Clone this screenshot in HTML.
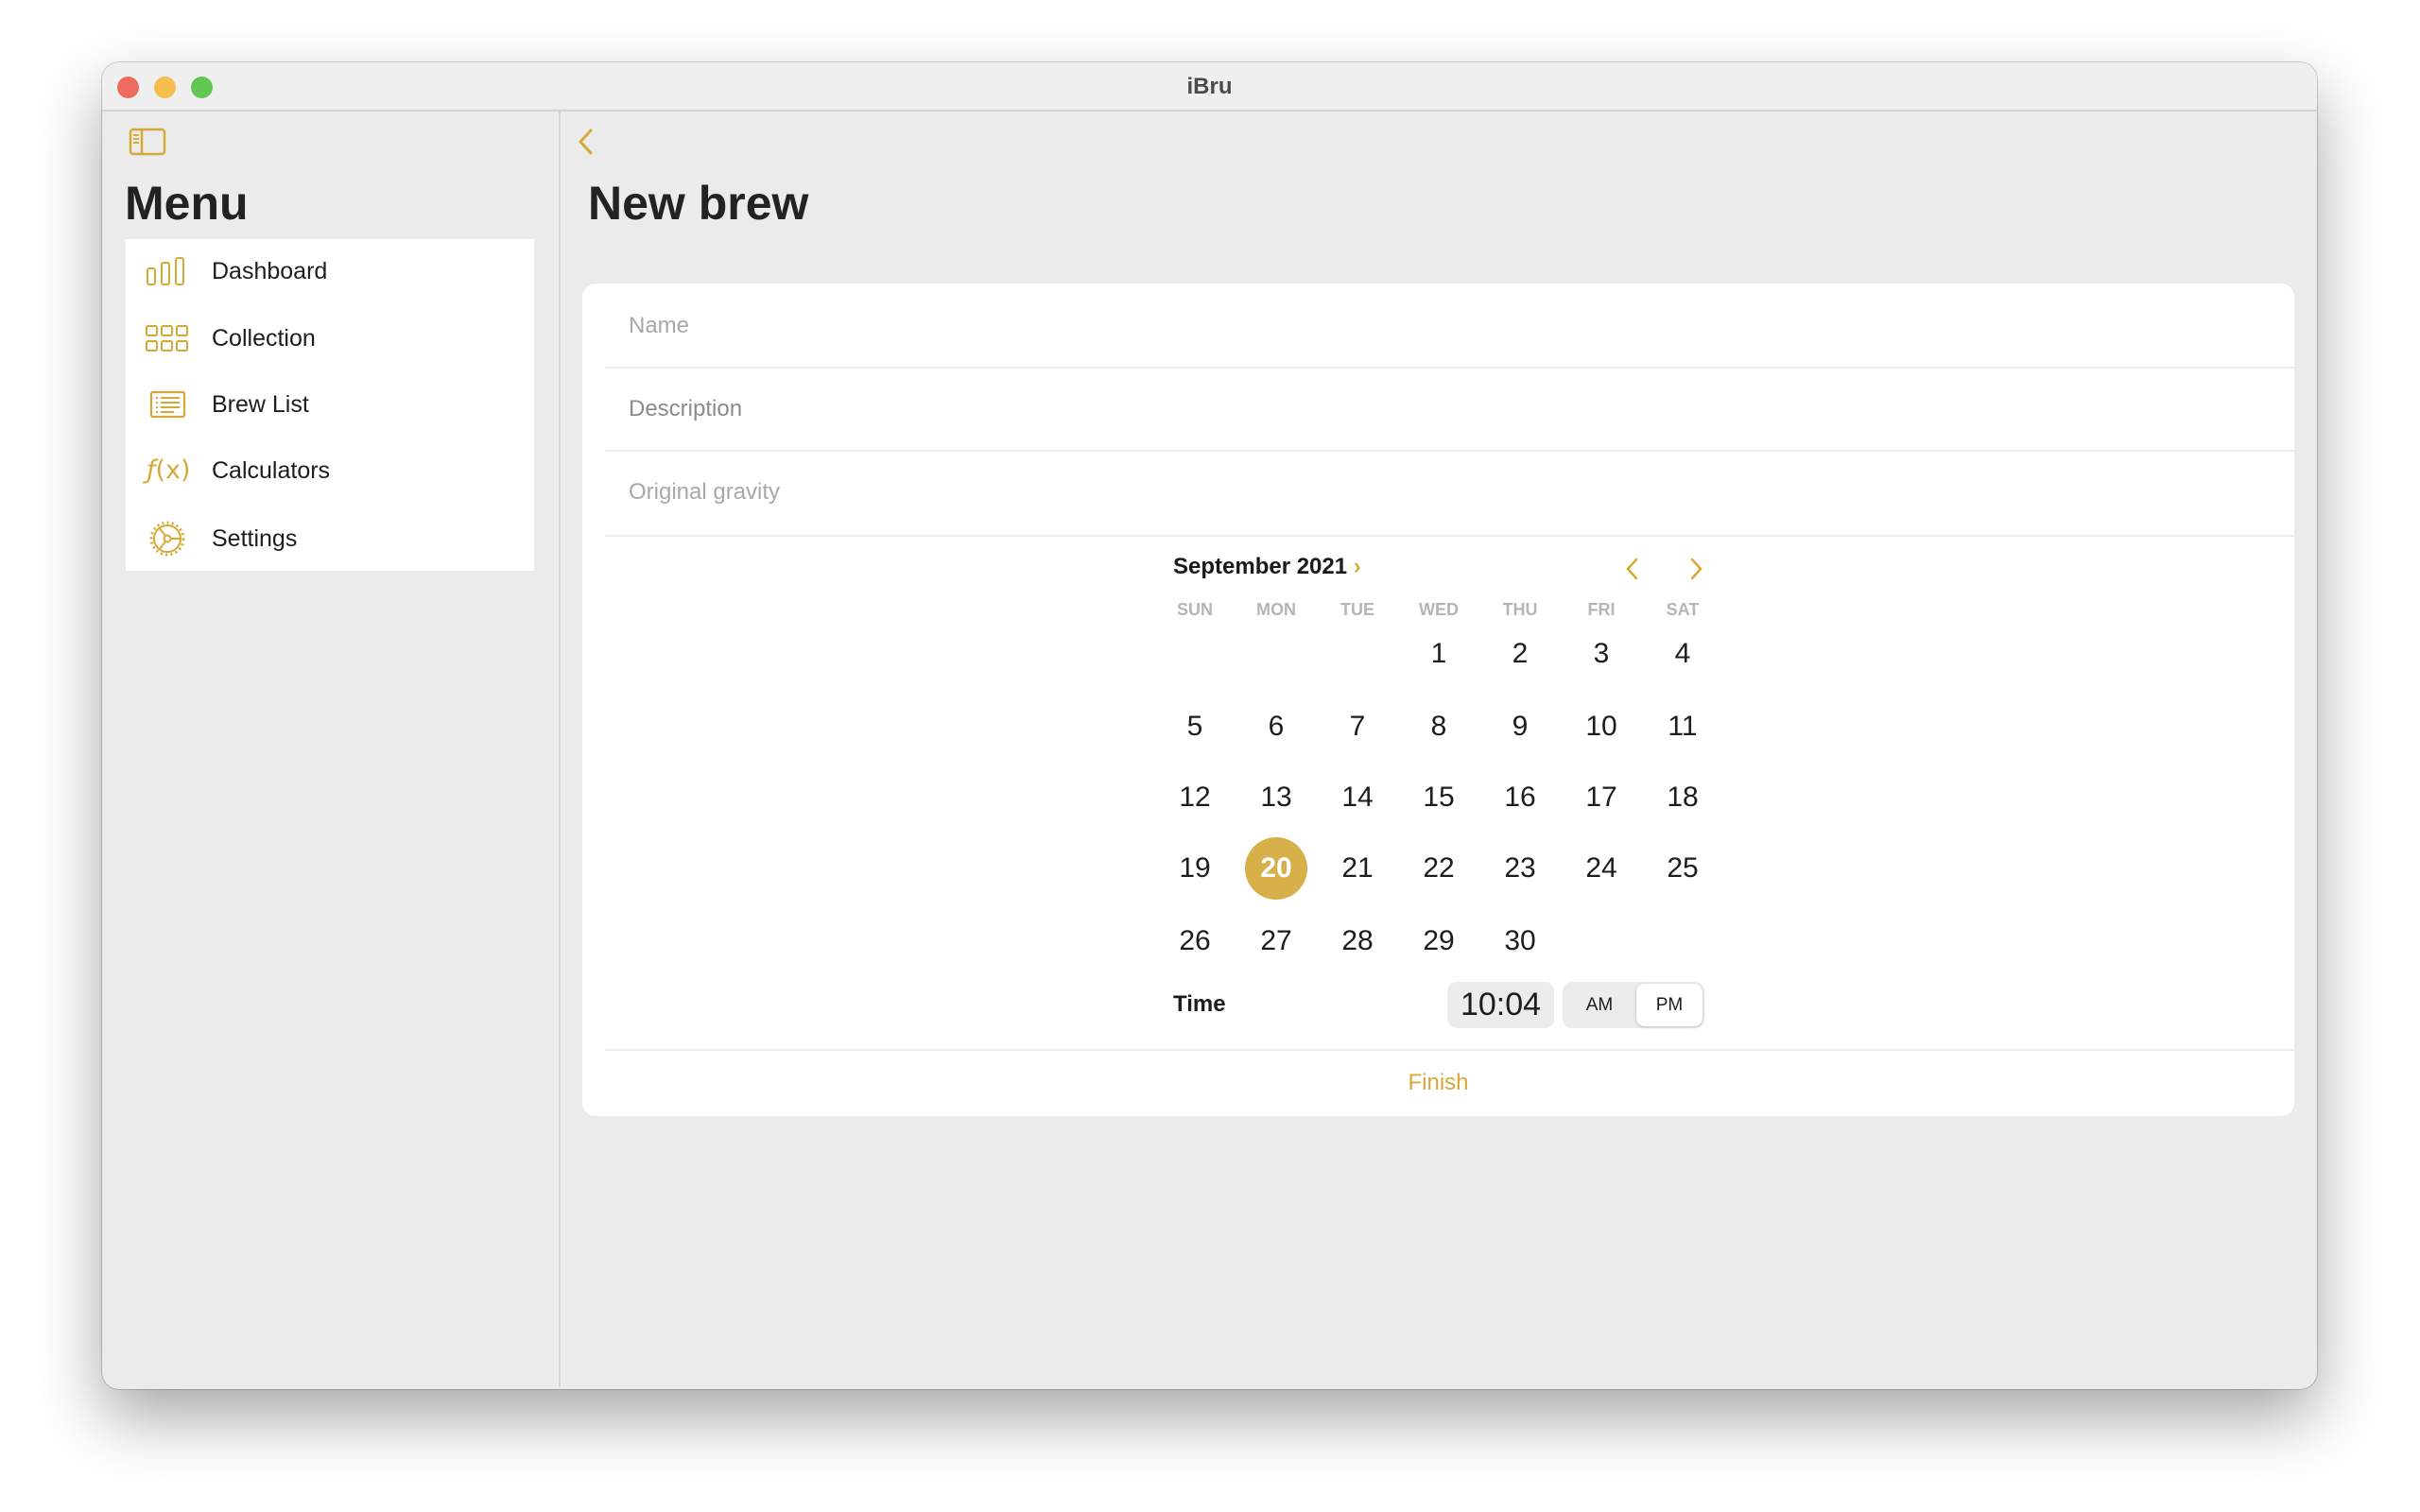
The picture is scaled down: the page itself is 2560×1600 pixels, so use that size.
<!DOCTYPE html>
<html><head><meta charset="utf-8"><style>
*{margin:0;padding:0;box-sizing:border-box}
body{width:2560px;height:1600px;background:#fff;font-family:"Liberation Sans",sans-serif;position:relative;overflow:hidden;color:#1d1d1d}
.win{position:absolute;left:108px;top:66px;width:2343px;height:1404px;border-radius:18px;background:#ebebeb;box-shadow:0 30px 70px rgba(0,0,0,.35),0 0 0 1px rgba(0,0,0,.18);overflow:hidden}
.tb{position:absolute;left:0;top:0;width:100%;height:52px;background:#efefef;border-bottom:2px solid #d3d3d3}
.dot{position:absolute;top:15px;width:23px;height:23px;border-radius:50%}
.abs{position:absolute}
.gold{color:#d4a937}
.side{position:absolute;left:483px;top:52px;width:2px;height:1350px;background:#d6d6d6}
.menu{position:absolute;left:25px;top:187px;width:432px;height:351px;background:#fff}
.mi{position:absolute;left:91px;font-size:25px;line-height:30px}
.fld{position:absolute;left:49px;font-size:24px;color:#a8a8a8}
.sep{position:absolute;left:24px;right:0;height:2px;background:#ececec}
.wd{position:absolute;font-size:18px;color:#b5b5b5;font-weight:bold;width:80px;text-align:center;top:335px}
.d{position:absolute;font-size:30px;width:80px;text-align:center;line-height:40px}
</style></head><body>
<div class="win">
 <div class="tb">
  <div class="dot" style="left:16px;background:#ee6a5f"></div>
  <div class="dot" style="left:55px;background:#f5be4f"></div>
  <div class="dot" style="left:94px;background:#62c554"></div>
  <div class="abs" style="left:0;width:100%;text-align:center;top:12px;font-size:24px;font-weight:bold;color:#4a4a4a">iBru</div>
 </div>
 <div class="side"></div>
 <svg class="abs" style="left:28px;top:69px" width="40" height="30" viewBox="0 0 40 30"><rect x="2" y="2" width="36" height="26" rx="3" fill="none" stroke="#d4a937" stroke-width="2.5"/><line x1="14" y1="2" x2="14" y2="28" stroke="#d4a937" stroke-width="2.5"/><path d="M5 8h6M5 12h6M5 16h6" stroke="#d4a937" stroke-width="2"/></svg>
 <div class="abs" style="left:24px;top:120px;font-size:50px;font-weight:bold;color:#222">Menu</div>
 <div class="menu">
  <svg class="abs" style="left:21px;top:18px" width="44" height="32" viewBox="0 0 44 32"><g fill="none" stroke="#d4a937" stroke-width="2"><rect x="2" y="13" width="8" height="17" rx="2"/><rect x="17" y="7" width="8" height="23" rx="2"/><rect x="32" y="2" width="8" height="28" rx="2"/></g></svg>
  <div class="mi" style="top:19px">Dashboard</div>
  <svg class="abs" style="left:21px;top:90px" width="46" height="30" viewBox="0 0 46 30"><g fill="none" stroke="#d4a937" stroke-width="2"><rect x="1" y="2" width="11" height="10" rx="1.5"/><rect x="17" y="2" width="11" height="10" rx="1.5"/><rect x="33" y="2" width="11" height="10" rx="1.5"/><rect x="1" y="18" width="11" height="10" rx="1.5"/><rect x="17" y="18" width="11" height="10" rx="1.5"/><rect x="33" y="18" width="11" height="10" rx="1.5"/></g></svg>
  <div class="mi" style="top:90px">Collection</div>
  <svg class="abs" style="left:25px;top:159px" width="40" height="32" viewBox="0 0 40 32"><rect x="2" y="3" width="35" height="26" rx="2" fill="none" stroke="#d4a937" stroke-width="2.2"/><g stroke="#d4a937" stroke-width="2"><path d="M7 9h2M7 14h2M7 19h2M7 24h2"/><path d="M12 9h20M12 14h20M12 19h20M12 24h14"/></g></svg>
  <div class="mi" style="top:160px">Brew List</div>
  <div class="abs gold" style="left:22px;top:229px;font-size:27px;font-family:'DejaVu Sans',sans-serif"><i>ƒ</i>(x)</div>
  <div class="mi" style="top:230px">Calculators</div>
  <svg class="abs" style="left:24px;top:297px" width="40" height="40" viewBox="0 0 40 40"><g fill="none" stroke="#d4a937" stroke-width="2"><circle cx="20" cy="20" r="14"/><circle cx="20" cy="20" r="3.5"/><path d="M23.5 20H34M18 17L11 8M18 23L11 32"/></g><circle cx="20" cy="20" r="17" fill="none" stroke="#d4a937" stroke-width="3" stroke-dasharray="2 3.3"/></svg>
  <div class="mi" style="top:302px">Settings</div>
 </div>
 <svg class="abs" style="left:500px;top:69px" width="24" height="30" viewBox="0 0 24 30"><path d="M17 3L6 15l11 12" fill="none" stroke="#d4a937" stroke-width="3" stroke-linecap="round" stroke-linejoin="round"/></svg>
 <div class="abs" style="left:514px;top:120px;font-size:50px;font-weight:bold;color:#222">New brew</div>
</div>
<div class="abs" style="left:616px;top:300px;width:1811px;height:881px;background:#fff;border-radius:14px">
  <div class="fld" style="top:31px">Name</div>
  <div class="sep" style="top:88px"></div>
  <div class="fld" style="top:119px;color:#8a8a8a">Description</div>
  <div class="sep" style="top:176px"></div>
  <div class="fld" style="top:207px">Original gravity</div>
  <div class="sep" style="top:266px"></div>
  <div class="abs" style="left:625px;top:286px;font-size:24px;font-weight:bold;color:#1a1a1a">September 2021 <span class="gold">›</span></div>
  <svg class="abs" style="left:1101px;top:288px" width="20" height="28" viewBox="0 0 20 28"><path d="M14 4L5 14l9 10" fill="none" stroke="#d4a937" stroke-width="2.5" stroke-linecap="round"/></svg>
  <svg class="abs" style="left:1168px;top:288px" width="20" height="28" viewBox="0 0 20 28"><path d="M6 4l9 10-9 10" fill="none" stroke="#d4a937" stroke-width="2.5" stroke-linecap="round"/></svg>
  <div class="wd" style="left:608px">SUN</div>
  <div class="wd" style="left:694px">MON</div>
  <div class="wd" style="left:780px">TUE</div>
  <div class="wd" style="left:866px">WED</div>
  <div class="wd" style="left:952px">THU</div>
  <div class="wd" style="left:1038px">FRI</div>
  <div class="wd" style="left:1124px">SAT</div>
  <div class="abs" style="left:701px;top:586px;width:66px;height:66px;border-radius:50%;background:#d8b04a"></div>
  <div class="abs" style="left:625px;top:749px;font-size:24px;font-weight:bold">Time</div>
  <div class="abs" style="left:915px;top:739px;width:113px;height:49px;border-radius:10px;background:#ececec;font-size:34px;text-align:center;line-height:49px">10:04</div>
  <div class="abs" style="left:1037px;top:739px;width:150px;height:49px;border-radius:10px;background:#ececec"></div>
  <div class="abs" style="left:1037px;top:739px;width:78px;height:49px;font-size:19px;text-align:center;line-height:49px">AM</div>
  <div class="abs" style="left:1115px;top:741px;width:70px;height:45px;border-radius:9px;background:#fff;box-shadow:0 1px 3px rgba(0,0,0,.2);font-size:19px;text-align:center;line-height:45px">PM</div>
  <div class="sep" style="top:810px"></div>
  <div class="abs gold" style="left:0;width:1811px;text-align:center;top:832px;font-size:24px">Finish</div>
  <div class="d" style="left:866px;top:372px">1</div><div class="d" style="left:952px;top:372px">2</div><div class="d" style="left:1038px;top:372px">3</div><div class="d" style="left:1124px;top:372px">4</div>
  <div class="d" style="left:608px;top:449px">5</div><div class="d" style="left:694px;top:449px">6</div><div class="d" style="left:780px;top:449px">7</div><div class="d" style="left:866px;top:449px">8</div><div class="d" style="left:952px;top:449px">9</div><div class="d" style="left:1038px;top:449px">10</div><div class="d" style="left:1124px;top:449px">11</div>
  <div class="d" style="left:608px;top:524px">12</div><div class="d" style="left:694px;top:524px">13</div><div class="d" style="left:780px;top:524px">14</div><div class="d" style="left:866px;top:524px">15</div><div class="d" style="left:952px;top:524px">16</div><div class="d" style="left:1038px;top:524px">17</div><div class="d" style="left:1124px;top:524px">18</div>
  <div class="d" style="left:608px;top:599px">19</div><div class="d" style="left:694px;top:599px;color:#fff;font-weight:bold">20</div><div class="d" style="left:780px;top:599px">21</div><div class="d" style="left:866px;top:599px">22</div><div class="d" style="left:952px;top:599px">23</div><div class="d" style="left:1038px;top:599px">24</div><div class="d" style="left:1124px;top:599px">25</div>
  <div class="d" style="left:608px;top:676px">26</div><div class="d" style="left:694px;top:676px">27</div><div class="d" style="left:780px;top:676px">28</div><div class="d" style="left:866px;top:676px">29</div><div class="d" style="left:952px;top:676px">30</div>
</div>
</body></html>
